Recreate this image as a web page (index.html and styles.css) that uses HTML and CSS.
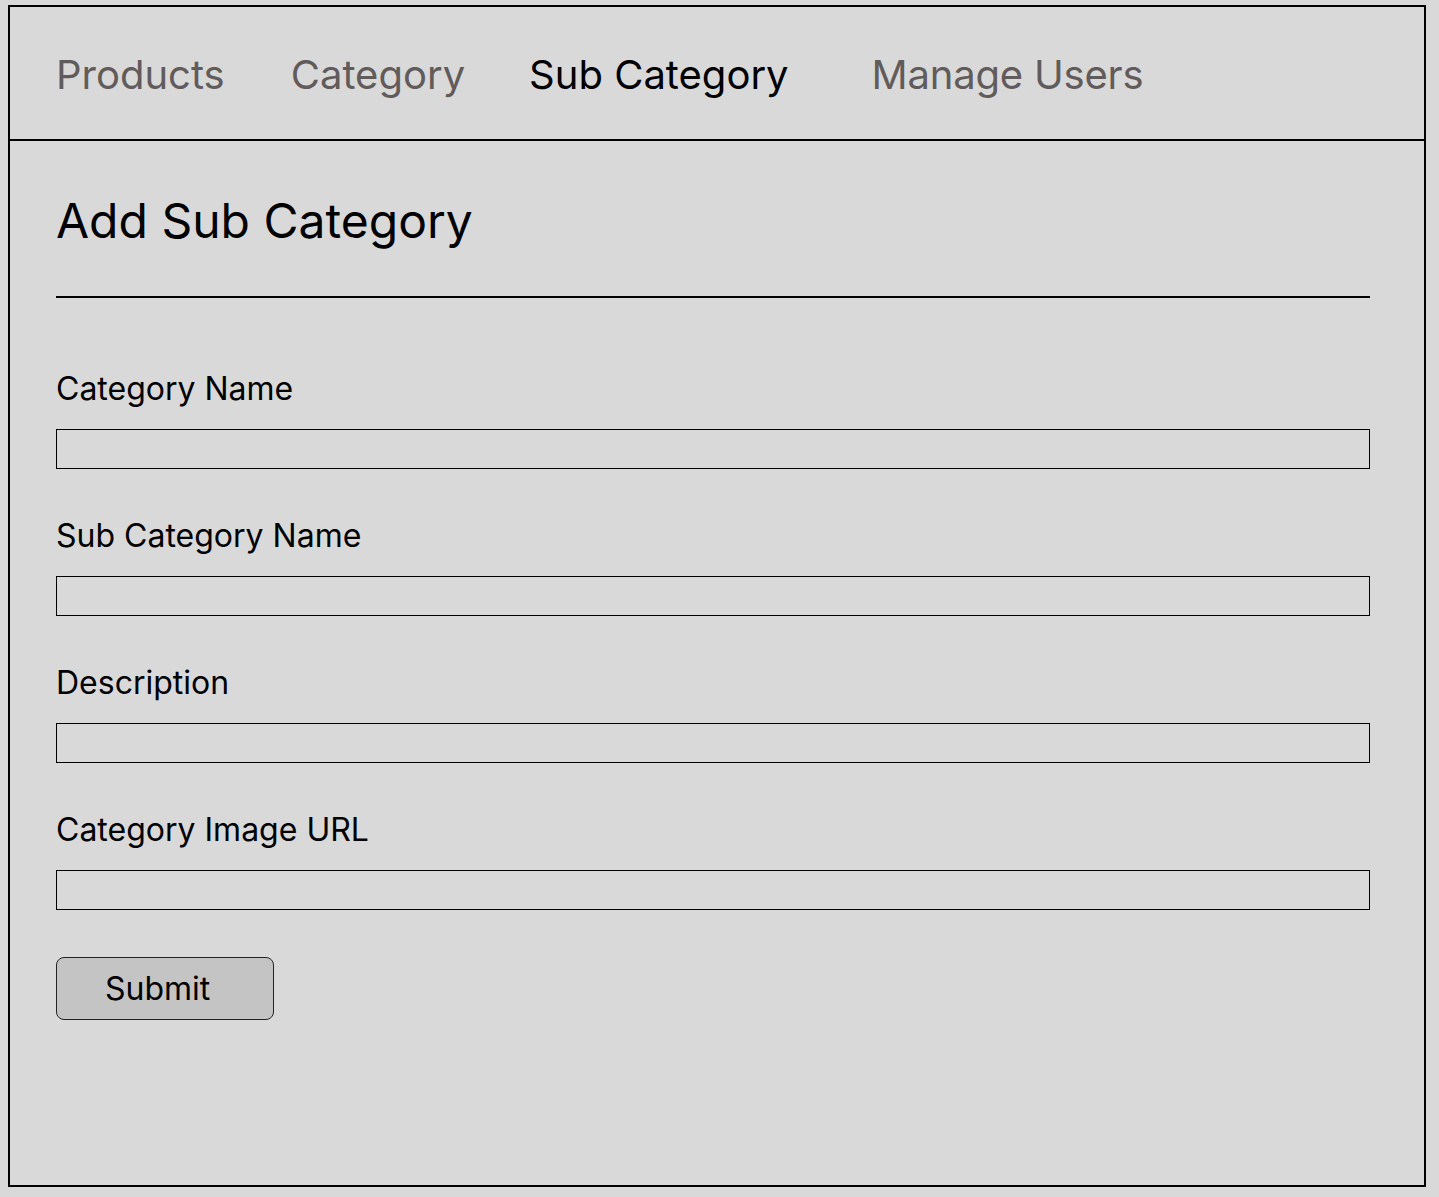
FILE: index.html
```html
<!DOCTYPE html>
<html lang="en">
<head>
<meta charset="utf-8">
<title>Add Sub Category</title>
<link rel="stylesheet" href="styles.css">
</head>
<body>
<div class="frame">
  <nav class="nav">
    <a class="nav-item" href="#">Products</a>
    <a class="nav-item category" href="#">Category</a>
    <a class="nav-item sub active" href="#">Sub Category</a>
    <a class="nav-item users" href="#">Manage Users</a>
  </nav>
  <main class="content">
    <h1 class="title">Add Sub Category</h1>
    <hr class="divider">
    <form class="form">
      <div class="field">
        <label class="label" for="cat">Category Name</label>
        <input class="input" id="cat" type="text">
      </div>
      <div class="field">
        <label class="label" for="sub">Sub Category Name</label>
        <input class="input" id="sub" type="text">
      </div>
      <div class="field">
        <label class="label" for="desc">Description</label>
        <input class="input" id="desc" type="text">
      </div>
      <div class="field">
        <label class="label" for="img">Category Image URL</label>
        <input class="input" id="img" type="text">
      </div>
      <button class="submit" type="button">Submit</button>
    </form>
  </main>
</div>
</body>
</html>
```

FILE: styles.css
```css
* { box-sizing: border-box; }

html, body {
  margin: 0;
  padding: 0;
  background: #d9d9d9;
}

body {
  font-family: Inter, "Noto Sans", sans-serif;
  color: #000;
  padding: 5px 0 0 8px;
}

.frame {
  width: 1418px;
  height: 1182px;
  border: 2px solid #000;
  background: #d9d9d9;
  display: flex;
  flex-direction: column;
}

.nav {
  height: 134px;
  border-bottom: 2px solid #000;
  display: flex;
  align-items: center;
  padding: 4px 0 0 46px;
}

.nav-item {
  font-size: 40px;
  line-height: 40px;
  color: #625b5b;
  text-decoration: none;
}

.nav-item.active { color: #000; }
.nav-item.category { margin-left: 66px; }
.nav-item.sub { margin-left: 64px; }
.nav-item.users { margin-left: 83px; letter-spacing: -0.2px; }

.content {
  padding: 56px 54px 0 46px;
}

.title {
  margin: 0;
  font-size: 48px;
  line-height: 48px;
  font-weight: 400;
}

.divider {
  margin: 51px 0 0 0;
  border: 0;
  height: 2px;
  background: #000;
}

.form {
  display: flex;
  flex-direction: column;
  padding-top: 75px;
}

.field {
  display: flex;
  flex-direction: column;
  gap: 24px;
  margin-bottom: 51px;
}

.field:nth-child(4) { margin-bottom: 47px; }

.label {
  font-size: 32px;
  line-height: 32px;
}

.input {
  height: 40px;
  width: 100%;
  border: 1px solid #000;
  background: transparent;
  margin: 0;
  padding: 0 8px;
  font: inherit;
}

.submit {
  width: 218px;
  height: 63px;
  border: 1px solid #222;
  border-radius: 8px;
  background: #c4c4c4;
  font-family: inherit;
  font-size: 32px;
  line-height: 32px;
  text-align: left;
  padding: 0 0 0 48px;
  color: #000;
}
```
